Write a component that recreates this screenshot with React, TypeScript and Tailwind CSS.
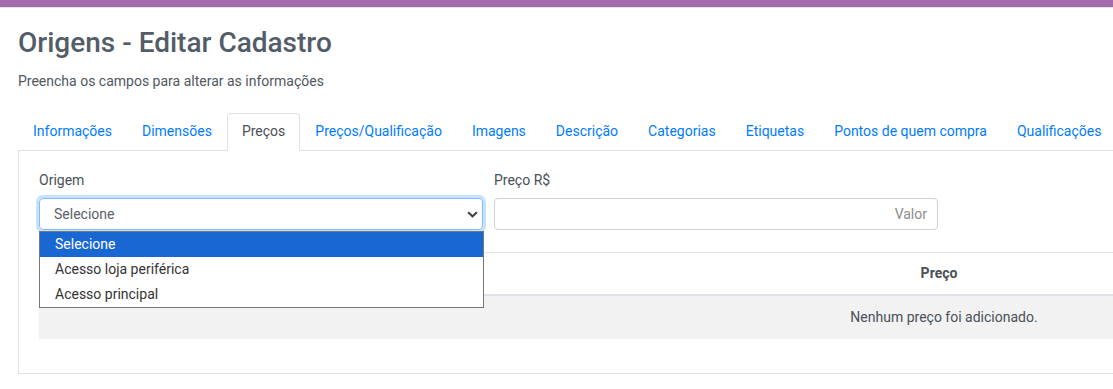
const tabs = [
  'Informações',
  'Dimensões',
  'Preços',
  'Preços/Qualificação',
  'Imagens',
  'Descrição',
  'Categorias',
  'Etiquetas',
  'Pontos de quem compra',
  'Qualificações',
];

const options = ['Selecione', 'Acesso loja periférica', 'Acesso principal'];

export default function App() {
  return (
    <div className="h-[389px] w-[1113px] overflow-hidden bg-white font-['Roboto',sans-serif] text-[14px] text-[#495057]">
      <div className="h-[7px] bg-[#a36bad]" />
      <div className="h-px bg-[#e4e4e4]" />

      <div className="w-[1850px] pl-[18px]">
        <h1 className="mt-[18px] text-[28px] leading-[34px] font-medium text-[#535d68]">
          Origens - Editar Cadastro
        </h1>
        <p className="mt-[11px] leading-[21px] text-[#50575e]">
          Preencha os campos para alterar as informações
        </p>

        <nav className="mt-[21px] flex border-b border-[#dee2e6]">
          {tabs.map((tab) => (
            <span
              key={tab}
              className={`-mb-px rounded-t border px-[14px] pt-[7px] pb-[8px] leading-[21px] whitespace-nowrap ${
                tab === 'Preços'
                  ? 'border-[#dee2e6] border-b-white bg-white text-[#495057]'
                  : 'border-transparent text-[#007bff]'
              }`}
            >
              {tab}
            </span>
          ))}
        </nav>

        <div className="border-x border-b border-[#dee2e6] px-[20px] pt-[19px] pb-[34px]">
          <div className="flex gap-[11px]">
            <div className="relative w-[444px]">
              <label className="block leading-[21px]">Origem</label>
              <div className="mt-[7px] flex h-[32px] items-center justify-between rounded border border-[#80bdff] pr-[4px] pl-[14px] text-[#5a6169] shadow-[0_0_0_3px_rgba(0,123,255,0.22)]">
                <span>Selecione</span>
                <svg width="11" height="7" viewBox="0 0 11 7" fill="none">
                  <path d="M1.2 1.2 5.5 5.4 9.8 1.2" stroke="#3a3a3a" strokeWidth="2" />
                </svg>
              </div>
              <ul className="absolute top-[61px] left-0 z-10 w-[445px] border border-[#767676] bg-white text-[#333]">
                {options.map((opt, i) => (
                  <li
                    key={opt}
                    className={`h-[25px] pl-[15px] leading-[25px] ${
                      i === 0 ? 'bg-[#1967d2] text-white' : ''
                    }`}
                  >
                    {opt}
                  </li>
                ))}
              </ul>
            </div>
            <div className="w-[444px]">
              <label className="block leading-[21px]">Preço R$</label>
              <div className="mt-[7px] flex h-[32px] items-center justify-end rounded border border-[#ced4da] pr-[10px] text-[#8d8d8d]">
                Valor
              </div>
            </div>
          </div>

          <table className="mt-[22px] w-[1808px] border-collapse">
            <thead>
              <tr className="border-t border-b-2 border-[#dee2e6]">
                <th className="py-[10px] pr-[8px] text-center leading-[21px] font-bold text-[#495057]">
                  Preço
                </th>
              </tr>
            </thead>
            <tbody>
              <tr className="bg-[#f2f2f2]">
                <td className="py-[11px] pl-[2px] text-center leading-[21px] text-[#495057]">
                  Nenhum preço foi adicionado.
                </td>
              </tr>
            </tbody>
          </table>
        </div>
      </div>
    </div>
  );
}
